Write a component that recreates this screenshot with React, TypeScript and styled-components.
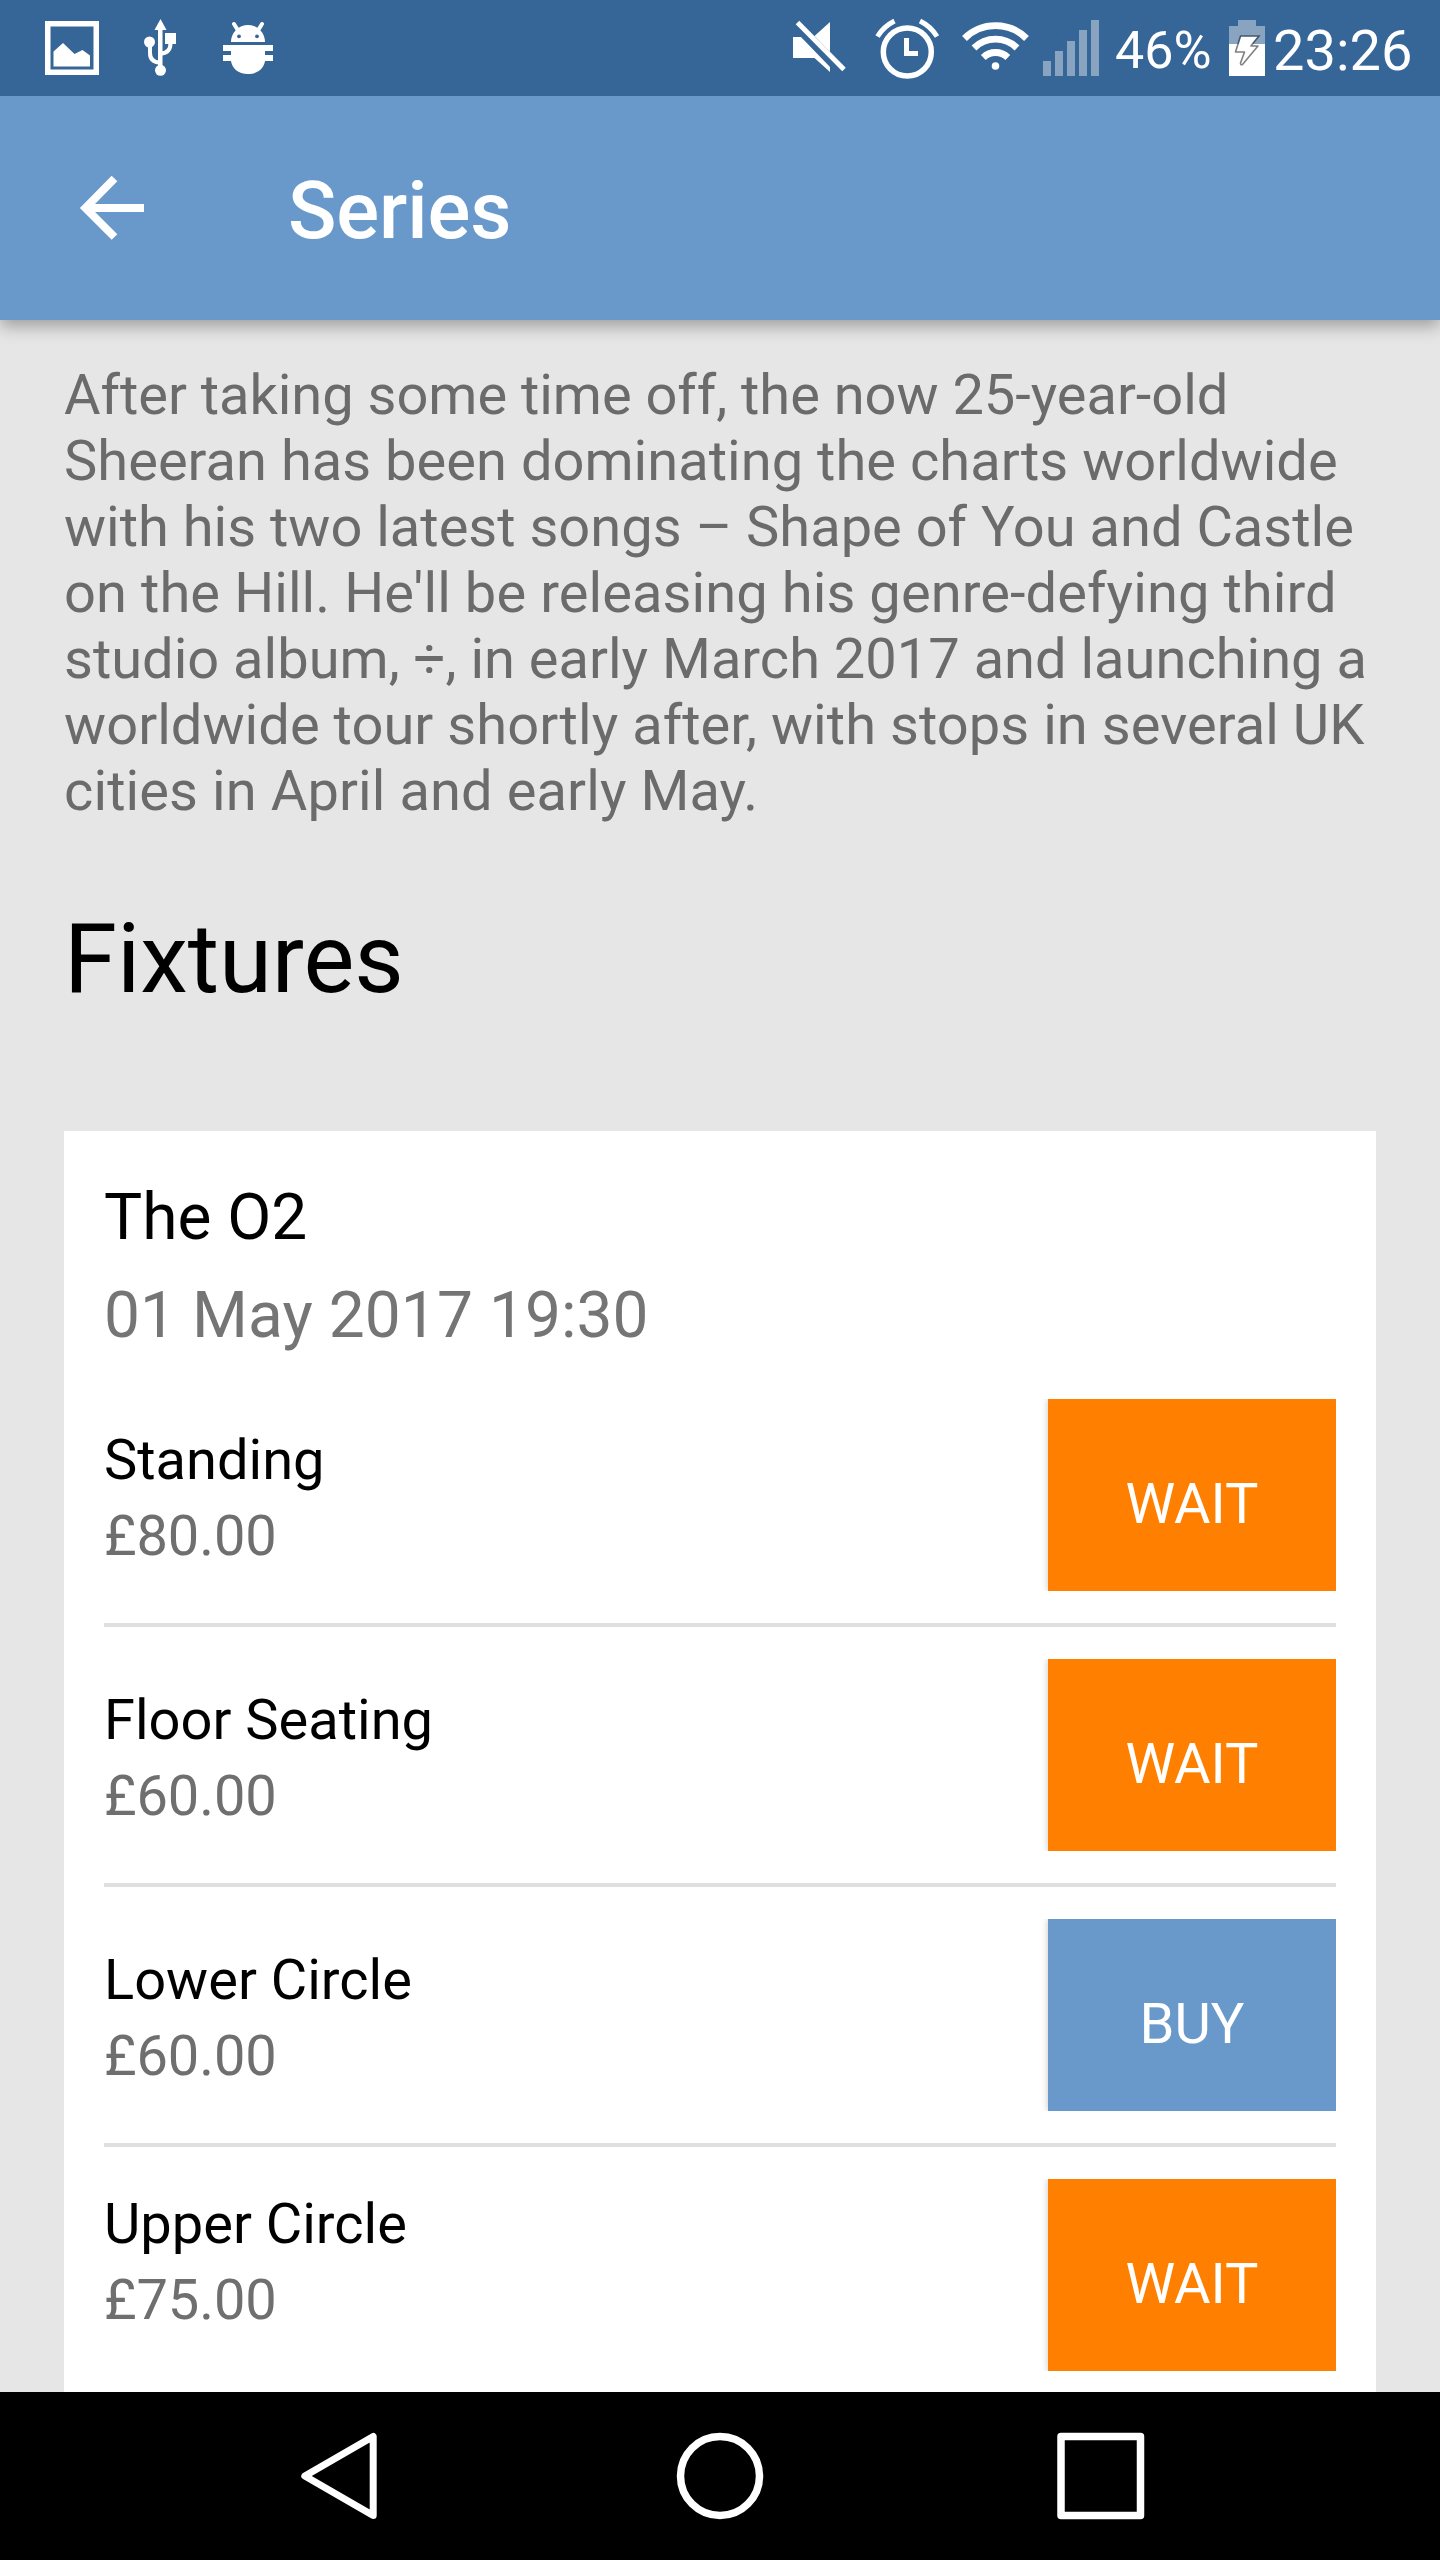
import React from 'react';
import styled, { createGlobalStyle } from 'styled-components';

const GlobalStyle = createGlobalStyle`
  *, *::before, *::after { box-sizing: border-box; }
  body {
    margin: 0;
    background: #e6e6e6;
    font-family: Roboto, "Noto Sans", sans-serif;
  }
  h1, h2, h3, p, ul { margin: 0; padding: 0; font-weight: 400; }
`;

const Screen = styled.div`
  width: 1440px;
  height: 2560px;
  display: flex;
  flex-direction: column;
  overflow: hidden;
  background: #e6e6e6;
`;

const StatusBar = styled.div`
  height: 96px;
  flex: none;
  display: flex;
  justify-content: space-between;
  background: #366697;
  color: #fff;
  z-index: 2;
`;

const StatusGroup = styled.div`
  display: flex;
  align-items: center;
`;

const StatusText = styled.span<{ $size: number; $width: number; $indent: number }>`
  width: ${(p) => p.$width}px;
  padding-left: ${(p) => p.$indent}px;
  padding-top: 5px;
  font-size: ${(p) => p.$size}px;
  line-height: 66px;
  white-space: nowrap;
`;

const Icon = styled.svg`
  display: block;
  flex: none;
`;

const AppBar = styled.header`
  height: 224px;
  flex: none;
  display: flex;
  align-items: center;
  padding-left: 64px;
  background: #6999cb;
  color: #fff;
  box-shadow: 0 6px 16px rgba(0, 0, 0, 0.32);
  z-index: 1;
`;

const BackButton = styled.button`
  width: 224px;
  padding: 0;
  border: 0;
  background: none;
  color: inherit;
`;

const Title = styled.h1`
  && { font-weight: 500; }
  padding-top: 6px;
  font-size: 80px;
  line-height: 94px;
  letter-spacing: -0.1px;
`;

const Content = styled.main`
  flex: 1;
  min-height: 0;
  overflow: hidden;
  padding: 42px 64px 0;
`;

const Description = styled.p`
  font-size: 56px;
  line-height: 66px;
  color: #6b6b6b;
  white-space: nowrap;
`;

const Line = styled.span<{ $tracking: number }>`
  display: block;
  letter-spacing: ${(p) => p.$tracking}px;
`;

const SectionTitle = styled.h2`
  margin-top: 79px;
  font-size: 96px;
  line-height: 112px;
  letter-spacing: -0.1px;
  color: #000;
`;

const Card = styled.section`
  margin-top: 116px;
  height: 1400px;
  padding: 49px 40px 0;
  background: #fff;
`;

const Venue = styled.h3`
  font-size: 64px;
  line-height: 76px;
  color: #000;
`;

const EventDate = styled.p`
  margin-top: 22px;
  font-size: 64px;
  line-height: 76px;
  letter-spacing: 0.08px;
  color: #757575;
`;

const TicketList = styled.ul`
  margin-top: 13px;
  list-style: none;
`;

const TicketRow = styled.li<{ $last: boolean }>`
  height: ${(p) => (p.$last ? 224 : 260)}px;
  display: flex;
  align-items: flex-start;
  justify-content: space-between;
  padding-top: 32px;
  border-bottom: ${(p) => (p.$last ? 0 : 4)}px solid #dfdfdf;
`;

const TicketInfo = styled.div<{ $last: boolean }>`
  padding-top: ${(p) => (p.$last ? 12 : 28)}px;
`;

const TicketName = styled.p`
  font-size: 56px;
  line-height: 66px;
  color: #000;
`;

const TicketPrice = styled.p`
  margin-top: 10px;
  font-size: 56px;
  line-height: 66px;
  letter-spacing: -0.1px;
  color: #6f6f6f;
`;

const ActionButton = styled.button<{ $buy: boolean }>`
  width: 288px;
  height: 192px;
  padding: 17px 0 0;
  border: 0;
  background: ${(p) => (p.$buy ? '#6999cb' : '#ff8000')};
  box-shadow: -1px 0 6px rgba(0, 0, 0, 0.18);
  clip-path: inset(0 0 0 -8px);
  color: #fff;
  font-family: inherit;
  font-size: 56px;
  line-height: 66px;
`;

const NavBar = styled.nav`
  height: 168px;
  flex: none;
  background: #000;
  display: flex;
  justify-content: center;
  z-index: 1;
`;

const NavButton = styled.button`
  width: 380px;
  display: flex;
  align-items: center;
  justify-content: center;
  padding: 0;
  border: 0;
  background: none;
`;

const lines = [
  { text: 'After taking some time off, the now 25-year-old', tracking: -0.03 },
  { text: 'Sheeran has been dominating the charts worldwide', tracking: 0.03 },
  { text: 'with his two latest songs – Shape of You and Castle', tracking: 0 },
  { text: "on the Hill. He'll be releasing his genre-defying third", tracking: 0.09 },
  { text: 'studio album, ÷, in early March 2017 and launching a', tracking: 0 },
  { text: 'worldwide tour shortly after, with stops in several UK', tracking: 0.055 },
  { text: 'cities in April and early May.', tracking: 0.1 },
];

const tickets = [
  { name: 'Standing', price: '£80.00', action: 'WAIT' },
  { name: 'Floor Seating', price: '£60.00', action: 'WAIT' },
  { name: 'Lower Circle', price: '£60.00', action: 'BUY' },
  { name: 'Upper Circle', price: '£75.00', action: 'WAIT' },
];

const NotificationIcons = () => (
  <Icon width="360" height="96" viewBox="0 0 360 96" fill="#fff">
    <path fillRule="evenodd" d="M45 21h54v54H45zM50.500 26.500v43h43v-43z" />
    <path d="M53.500 51.500L63 43l11.500 11 8-4 7.500 5.500V66.500H53.500z" />
    <path d="M160.500 19l6 11h-12z" />
    <path d="M158 29h4.500v38H158zM165 33h11v11h-11z" />
    <circle cx="149.500" cy="42" r="5.500" />
    <circle cx="160.500" cy="70.300" r="5.500" />
    <path d="M150 44v9q0 9 9.500 9.500M170.500 43q0 10-9.500 10.500" fill="none" stroke="#fff" strokeWidth="4" />
    <path d="M234 24l5 8M262 24l-5 8" stroke="#fff" strokeWidth="4" strokeLinecap="round" />
    <path d="M231 42a17 17 0 0 1 34 0z" />
    <circle cx="239" cy="36.300" r="1.900" fill="#366697" />
    <circle cx="257" cy="36.300" r="1.900" fill="#366697" />
    <path d="M223 45h50v6h-8v4h8v6h-8c-1 7-7 13-17 13s-16-6-17-13h-8v-6h8v-4h-8z" />
  </Icon>
);

const SystemIcons = () => (
  <Icon width="340" height="96" viewBox="0 0 340 96" fill="#fff">
    <path d="M23 37h8l29 30v5L44.500 58H23zM44.500 36L60 22v30z" />
    <path d="M27.500 22.500l46.500 47" stroke="#fff" strokeWidth="5" />
    <circle cx="137.300" cy="52" r="24" fill="none" stroke="#fff" strokeWidth="5.500" />
    <path d="M134 38h5v13h9v5h-14z" />
    <path d="M107.500 36.500q6-10 17-15.500M167 36.500q-6-10-17-15.500" fill="none" stroke="#fff" strokeWidth="5" />
    <path d="M194.500 38.500a44 44 0 0 1 62 0M204 48a30.500 30.500 0 0 1 43 0M213.300 57.500a17.500 17.500 0 0 1 24.500 0" fill="none" stroke="#fff" strokeWidth="6.800" />
    <circle cx="225.500" cy="66" r="3.800" />
    <path d="M273 61h8v15h-8zM285 51h8v25h-8zM297 41h8v35h-8zM309 30h8v46h-8zM321 20h8v56h-8z" fill="#88a4c1" />
  </Icon>
);

const BatteryIcon = () => (
  <Icon width="36" height="96" viewBox="0 0 36 96">
    <path d="M9 20h18v6h9v18H0V26h9z" fill="#88a4c1" />
    <path d="M0 44h36v32H0z" fill="#fff" />
    <path d="M11.500 36H30l-8 10h7L13 65l-1.500 0L15.500 52H7z" fill="#fff" />
    <path d="M9 44l2.500-8H30l-6.500 8" fill="none" stroke="#44586d" strokeWidth="1.600" />
    <path d="M9 44l-2.500 8h9L11.500 63q0 2.500 2 1.500L29 46h-7l1.500-2" fill="none" stroke="#808080" strokeWidth="1.600" strokeLinejoin="round" />
  </Icon>
);

const BackArrow = () => (
  <Icon width="96" height="96" viewBox="0 0 96 96" fill="none" stroke="#fff" strokeWidth="8">
    <path d="M80 48H24M50.500 18.500L21.500 48l29 29" />
  </Icon>
);

export default function App() {
  return (
    <>
      <GlobalStyle />
      <Screen>
        <StatusBar>
          <StatusGroup>
            <NotificationIcons />
          </StatusGroup>
          <StatusGroup>
            <SystemIcons />
            <StatusText $size={52} $width={119} $indent={5}>46%</StatusText>
            <BatteryIcon />
            <StatusText $size={56} $width={175} $indent={8}>23:26</StatusText>
          </StatusGroup>
        </StatusBar>
        <AppBar>
          <BackButton aria-label="Back">
            <BackArrow />
          </BackButton>
          <Title>Series</Title>
        </AppBar>
        <Content>
          <Description>
            {lines.map((line) => (
              <Line key={line.text} $tracking={line.tracking}>
                {line.text}
              </Line>
            ))}
          </Description>
          <SectionTitle>Fixtures</SectionTitle>
          <Card>
            <Venue>The O2</Venue>
            <EventDate>01 May 2017 19:30</EventDate>
            <TicketList>
              {tickets.map((t, i) => (
                <TicketRow key={t.name} $last={i === tickets.length - 1}>
                  <TicketInfo $last={i === tickets.length - 1}>
                    <TicketName>{t.name}</TicketName>
                    <TicketPrice>{t.price}</TicketPrice>
                  </TicketInfo>
                  <ActionButton $buy={t.action === 'BUY'}>{t.action}</ActionButton>
                </TicketRow>
              ))}
            </TicketList>
          </Card>
        </Content>
        <NavBar>
          <NavButton aria-label="Back">
            <Icon width="90" height="168" viewBox="0 0 90 168" fill="none" stroke="#fff" strokeWidth="7" strokeLinejoin="round">
              <path d="M78.200 44.500v79L9.800 84z" />
            </Icon>
          </NavButton>
          <NavButton aria-label="Home">
            <Icon width="90" height="168" viewBox="0 0 90 168" fill="none" stroke="#fff" strokeWidth="7.500">
              <circle cx="45" cy="84" r="39.500" />
            </Icon>
          </NavButton>
          <NavButton aria-label="Overview">
            <Icon width="90" height="168" viewBox="0 0 90 168" fill="none" stroke="#fff" strokeWidth="7.500" strokeLinejoin="round">
              <path d="M6 44.500h79.500v79H6z" />
            </Icon>
          </NavButton>
        </NavBar>
      </Screen>
    </>
  );
}
